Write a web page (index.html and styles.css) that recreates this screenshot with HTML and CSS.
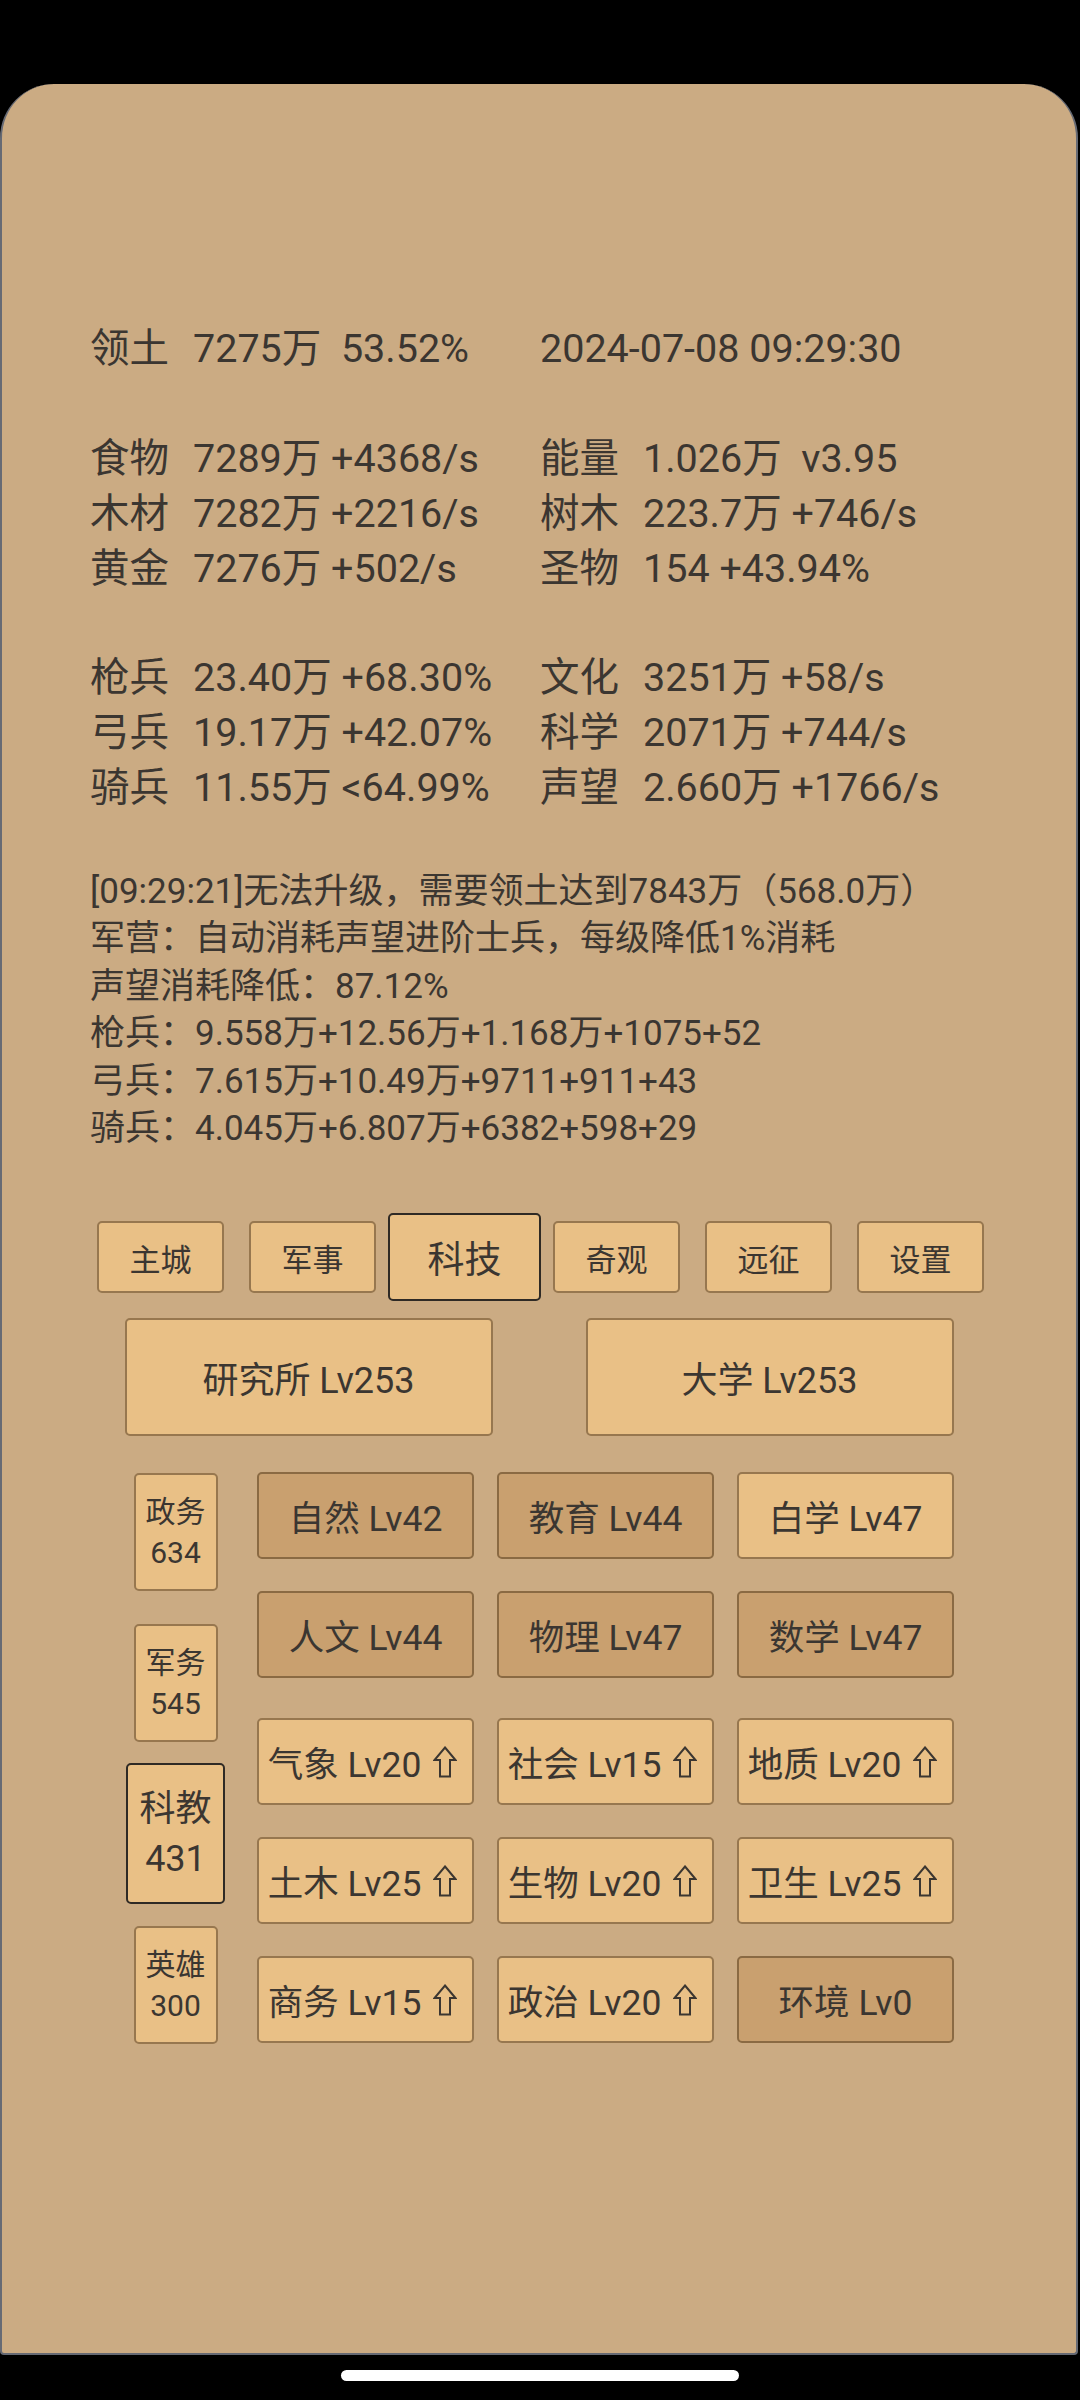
FILE: index.html
```html
<!DOCTYPE html>
<html lang="zh">
<head>
<meta charset="utf-8">
<title>科技</title>
<link rel="stylesheet" href="styles.css">
</head>
<body>
<div class="screen">
  <main class="card">
    <section class="stats">
      <div class="row"><div class="cell"><span class="lbl">领土</span><span class="val">7275万  53.52%</span></div><div class="cell"><span class="val">2024-07-08 09:29:30</span></div></div>
      <div class="row"></div>
      <div class="row"><div class="cell"><span class="lbl">食物</span><span class="val">7289万 +4368/s</span></div><div class="cell"><span class="lbl">能量</span><span class="val">1.026万  v3.95</span></div></div>
      <div class="row"><div class="cell"><span class="lbl">木材</span><span class="val">7282万 +2216/s</span></div><div class="cell"><span class="lbl">树木</span><span class="val">223.7万 +746/s</span></div></div>
      <div class="row"><div class="cell"><span class="lbl">黄金</span><span class="val">7276万 +502/s</span></div><div class="cell"><span class="lbl">圣物</span><span class="val">154 +43.94%</span></div></div>
      <div class="row"></div>
      <div class="row"><div class="cell"><span class="lbl">枪兵</span><span class="val">23.40万 +68.30%</span></div><div class="cell"><span class="lbl">文化</span><span class="val">3251万 +58/s</span></div></div>
      <div class="row"><div class="cell"><span class="lbl">弓兵</span><span class="val">19.17万 +42.07%</span></div><div class="cell"><span class="lbl">科学</span><span class="val">2071万 +744/s</span></div></div>
      <div class="row"><div class="cell"><span class="lbl">骑兵</span><span class="val">11.55万 &lt;64.99%</span></div><div class="cell"><span class="lbl">声望</span><span class="val">2.660万 +1766/s</span></div></div>
    </section>

    <section class="log">
      <p>[09:29:21]无法升级，需要领土达到7843万（568.0万）</p>
      <p>军营：自动消耗声望进阶士兵，每级降低1%消耗</p>
      <p>声望消耗降低：87.12%</p>
      <p>枪兵：9.558万+12.56万+1.168万+1075+52</p>
      <p>弓兵：7.615万+10.49万+9711+911+43</p>
      <p>骑兵：4.045万+6.807万+6382+598+29</p>
    </section>

    <nav class="tabs">
      <div class="tab-slot"><div class="tab">主城</div></div>
      <div class="tab-slot"><div class="tab">军事</div></div>
      <div class="tab-slot"><div class="tab active">科技</div></div>
      <div class="tab-slot"><div class="tab">奇观</div></div>
      <div class="tab-slot"><div class="tab">远征</div></div>
      <div class="tab-slot"><div class="tab">设置</div></div>
    </nav>

    <div class="buildings">
      <div class="btn big">研究所 Lv253</div>
      <div class="btn big">大学 Lv253</div>
    </div>

    <div class="science">
      <div class="side">
        <div class="side-slot"><div class="btn side-btn"><span>政务</span><span>634</span></div></div>
        <div class="side-slot"><div class="btn side-btn"><span>军务</span><span>545</span></div></div>
        <div class="side-slot"><div class="btn side-btn active"><span>科教</span><span>431</span></div></div>
        <div class="side-slot"><div class="btn side-btn"><span>英雄</span><span>300</span></div></div>
      </div>
      <div class="grids">
        <div class="grid">
          <div class="btn cellbtn done">自然 Lv42</div>
          <div class="btn cellbtn done">教育 Lv44</div>
          <div class="btn cellbtn">白学 Lv47</div>
          <div class="btn cellbtn done">人文 Lv44</div>
          <div class="btn cellbtn done">物理 Lv47</div>
          <div class="btn cellbtn done">数学 Lv47</div>
        </div>
        <div class="grid second">
          <div class="btn cellbtn">气象 Lv20<svg class="up" viewBox="0 0 24 32"><polygon points="12,1.5 22.5,14 17,14 17,30.5 7,30.5 7,14 1.5,14"/></svg></div>
          <div class="btn cellbtn">社会 Lv15<svg class="up" viewBox="0 0 24 32"><polygon points="12,1.5 22.5,14 17,14 17,30.5 7,30.5 7,14 1.5,14"/></svg></div>
          <div class="btn cellbtn">地质 Lv20<svg class="up" viewBox="0 0 24 32"><polygon points="12,1.5 22.5,14 17,14 17,30.5 7,30.5 7,14 1.5,14"/></svg></div>
          <div class="btn cellbtn">土木 Lv25<svg class="up" viewBox="0 0 24 32"><polygon points="12,1.5 22.5,14 17,14 17,30.5 7,30.5 7,14 1.5,14"/></svg></div>
          <div class="btn cellbtn">生物 Lv20<svg class="up" viewBox="0 0 24 32"><polygon points="12,1.5 22.5,14 17,14 17,30.5 7,30.5 7,14 1.5,14"/></svg></div>
          <div class="btn cellbtn">卫生 Lv25<svg class="up" viewBox="0 0 24 32"><polygon points="12,1.5 22.5,14 17,14 17,30.5 7,30.5 7,14 1.5,14"/></svg></div>
          <div class="btn cellbtn">商务 Lv15<svg class="up" viewBox="0 0 24 32"><polygon points="12,1.5 22.5,14 17,14 17,30.5 7,30.5 7,14 1.5,14"/></svg></div>
          <div class="btn cellbtn">政治 Lv20<svg class="up" viewBox="0 0 24 32"><polygon points="12,1.5 22.5,14 17,14 17,30.5 7,30.5 7,14 1.5,14"/></svg></div>
          <div class="btn cellbtn done">环境 Lv0</div>
        </div>
      </div>
    </div>
  </main>
  <div class="home-bar"></div>
</div>
</body>
</html>
```

FILE: styles.css
```css
* { box-sizing: border-box; }

html, body {
  margin: 0;
  padding: 0;
  background: #000;
}

body {
  width: 1080px;
  height: 2400px;
  overflow: hidden;
  font-family: Roboto, "Noto Sans CJK SC", sans-serif;
  color: #3b3631;
}

.screen {
  padding-top: 84px;
}

.card {
  width: 1078px;
  height: 2271px;
  background: #cbab83;
  border-left: 2px solid #666a74;
  border-right: 2px solid #666a74;
  border-bottom: 2px solid #666a74;
  border-radius: 54px 54px 4px 4px;
  padding-top: 238px;
}

/* stats */
.stats {
  padding-left: 88px;
  font-size: 39.5px;
}

.row {
  display: grid;
  grid-template-columns: 450px 1fr;
  height: 54.9px;
  line-height: 54.9px;
  white-space: pre;
}

.lbl {
  display: inline-block;
  width: 103px;
}

/* log */
.log {
  padding-left: 88px;
  margin-top: 52px;
  font-size: 35px;
  line-height: 47.4px;
}

.log p {
  margin: 0;
  white-space: nowrap;
}

/* tabs */
.tabs {
  display: flex;
  justify-content: center;
  align-items: center;
  height: 88px;
  margin-top: 61px;
  padding-left: 3px;
}

.tab-slot {
  width: 152px;
  display: flex;
  justify-content: center;
}

.tab {
  width: 127px;
  height: 72px;
  flex: none;
  display: flex;
  align-items: center;
  justify-content: center;
  background: #e9c086;
  border: 2px solid #97774f;
  border-radius: 5px;
  font-size: 31px;
}

.tab.active {
  width: 153px;
  height: 88px;
  font-size: 37px;
  border-color: #2f2a25;
}

/* generic button */
.btn {
  background: #e9c086;
  border: 2px solid #97774f;
  border-radius: 5px;
  display: flex;
  align-items: center;
  justify-content: center;
  white-space: nowrap;
}

.btn.done {
  background: #c9a06f;
  border-color: #8a6a43;
}

/* buildings */
.buildings {
  display: flex;
  justify-content: center;
  gap: 93px;
  margin-top: 17px;
}

.big {
  width: 368px;
  height: 118px;
  font-size: 36px;
}

/* science */
.science {
  display: flex;
  margin-top: 20px;
  padding-left: 124px;
}

.side {
  width: 99px;
  display: flex;
  flex-direction: column;
}

.side-slot {
  height: 151px;
  display: flex;
  align-items: center;
  justify-content: center;
}

.side-btn {
  width: 84px;
  height: 118px;
  flex-direction: column;
  font-size: 30px;
  line-height: 41px;
}

.side-btn.active {
  width: 99px;
  height: 141px;
  font-size: 36px;
  line-height: 50px;
  border-color: #2f2a25;
}

.grids {
  margin-left: 32px;
}

.grid {
  display: grid;
  grid-template-columns: repeat(3, 217px);
  grid-auto-rows: 87px;
  column-gap: 23px;
  row-gap: 32px;
  margin-top: 16px;
}

.grid.second {
  margin-top: 40px;
}

.cellbtn {
  font-size: 35.5px;
}

.up {
  width: 24px;
  height: 32px;
  margin-left: 12px;
  margin-right: 6px;
  fill: none;
  stroke: #3b3631;
  stroke-width: 2;
  stroke-linejoin: miter;
}

.home-bar {
  width: 398px;
  height: 11px;
  margin: 15px auto 0;
  background: #fff;
  border-radius: 6px;
}
```
